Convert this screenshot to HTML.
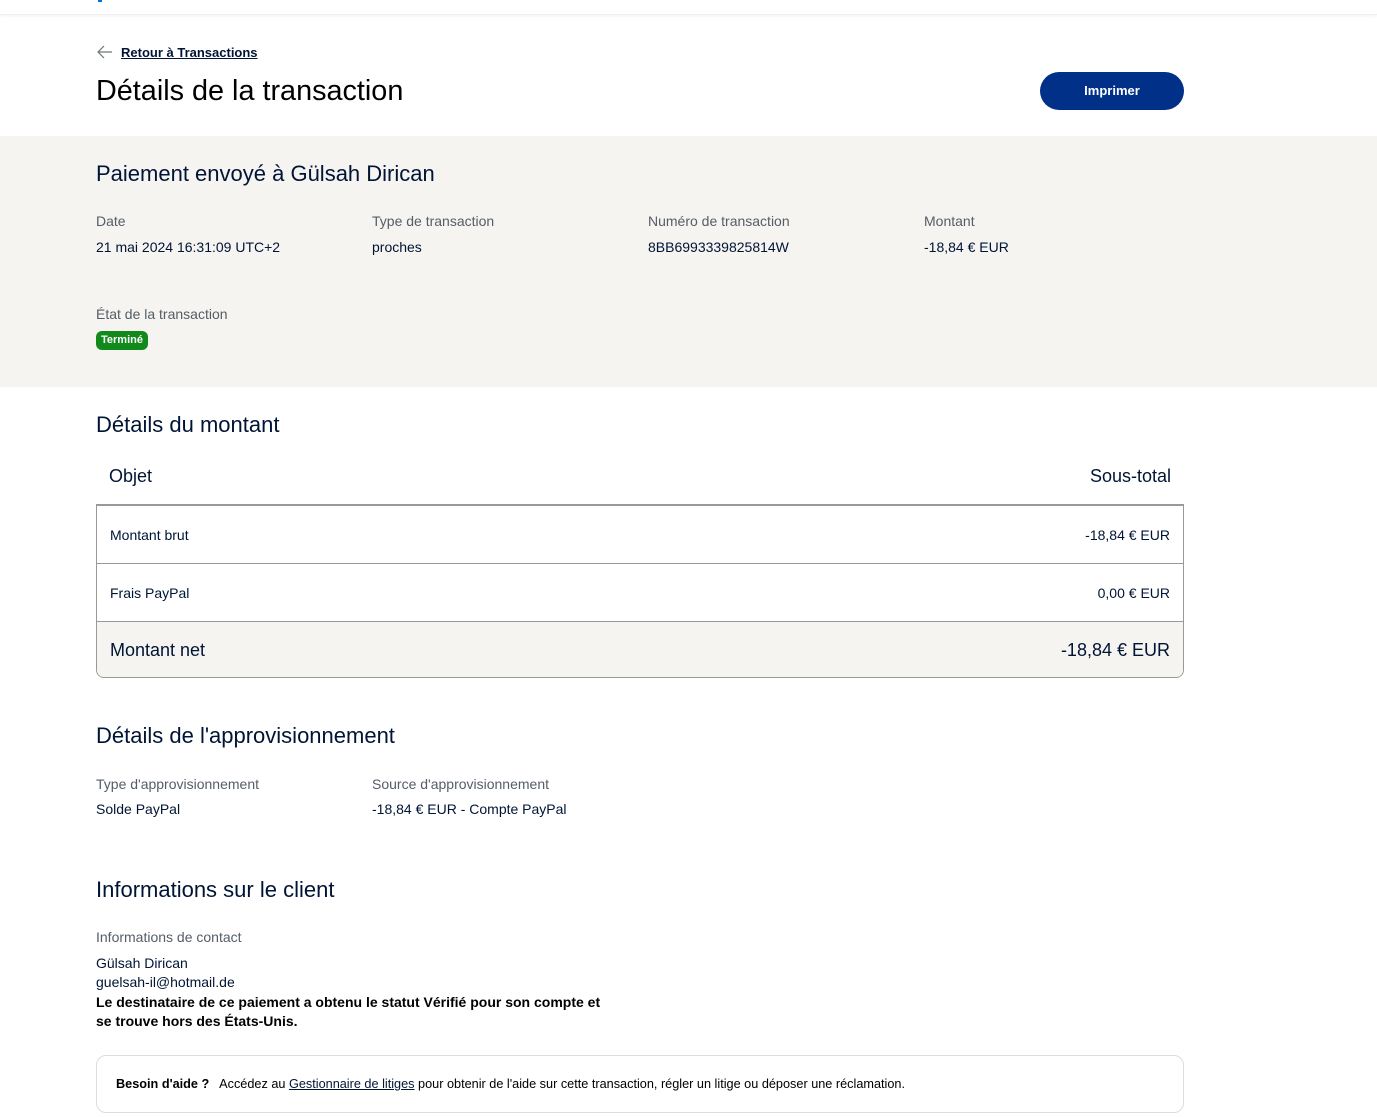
<!DOCTYPE html>
<html><head><meta charset="utf-8"><style>
*{box-sizing:border-box;margin:0;padding:0}
body{width:1377px;height:1117px;overflow:hidden;background:#fff;font-family:"Liberation Sans",Arial,sans-serif;color:#001435;position:relative}
.a{position:absolute;white-space:nowrap}
.lbl{font-size:14px;color:#545d68}
.val{font-size:14px;color:#001435}
h2{font-weight:400;font-size:22px;color:#001435}
</style></head><body>
<div class="a" style="left:0;top:0;width:1377px;height:15px;border-bottom:1px solid #eee;box-shadow:0 1px 3px rgba(0,0,0,.05)"></div>
<div class="a" style="left:98px;top:0;width:4px;height:2px;background:#0070e0"></div>
<svg class="a" style="left:97px;top:45px" width="16" height="14" viewBox="0 0 16 14"><path d="M15 7H2M7 1L1 7l6 6" fill="none" stroke="#6c7378" stroke-width="1.2"/></svg>
<div class="a" style="left:121px;top:45px;font-size:13px;font-weight:700;text-decoration:underline;color:#001435">Retour à Transactions</div>
<div class="a" style="left:96px;top:75px;font-size:28.8px;color:#000">Détails de la transaction</div>
<div class="a" style="left:1040px;top:72px;width:144px;height:38px;border-radius:19px;background:#003087;color:#fff;font-size:13px;font-weight:700;text-align:center;line-height:38px">Imprimer</div>
<div class="a" style="left:0;top:136px;width:1377px;height:251px;background:#f5f4f0"></div>
<h2 class="a" style="left:96px;top:161px">Paiement envoyé à Gülsah Dirican</h2>
<div class="a lbl" style="left:96px;top:213px">Date</div><div class="a val" style="left:96px;top:239px">21 mai 2024 16:31:09 UTC+2</div>
<div class="a lbl" style="left:372px;top:213px">Type de transaction</div><div class="a val" style="left:372px;top:239px">proches</div>
<div class="a lbl" style="left:648px;top:213px">Numéro de transaction</div><div class="a val" style="left:648px;top:239px">8BB6993339825814W</div>
<div class="a lbl" style="left:924px;top:213px">Montant</div><div class="a val" style="left:924px;top:239px">-18,84 € EUR</div>
<div class="a lbl" style="left:96px;top:306px">État de la transaction</div>
<div class="a" style="left:96px;top:331px;width:52px;height:19px;border-radius:6px;background:#128a1b;color:#fff;font-size:11px;font-weight:700;text-align:center;line-height:19px">Terminé</div>
<h2 class="a" style="left:96px;top:412px">Détails du montant</h2>
<div class="a" style="left:109px;top:466px;font-size:18px">Objet</div>
<div class="a" style="left:1000px;width:171px;text-align:right;top:466px;font-size:18px">Sous-total</div>
<div class="a" style="left:96px;top:504px;width:1088px;height:174px;border:1px solid #999;border-top:2px solid #999;border-radius:0 0 8px 8px;overflow:hidden">
 <div style="height:58px;border-bottom:1px solid #999;display:flex;justify-content:space-between;align-items:center;padding:0 13px;font-size:14px"><span>Montant brut</span><span>-18,84 € EUR</span></div>
 <div style="height:58px;border-bottom:1px solid #999;display:flex;justify-content:space-between;align-items:center;padding:0 13px;font-size:14px"><span>Frais PayPal</span><span>0,00 € EUR</span></div>
 <div style="height:56px;background:#f5f4f0;display:flex;justify-content:space-between;align-items:center;padding:0 13px;font-size:18px"><span>Montant net</span><span>-18,84 € EUR</span></div>
</div>
<h2 class="a" style="left:96px;top:723px">Détails de l'approvisionnement</h2>
<div class="a lbl" style="left:96px;top:776px">Type d'approvisionnement</div><div class="a val" style="left:96px;top:801px">Solde PayPal</div>
<div class="a lbl" style="left:372px;top:776px">Source d'approvisionnement</div><div class="a val" style="left:372px;top:801px">-18,84 € EUR - Compte PayPal</div>
<h2 class="a" style="left:96px;top:877px">Informations sur le client</h2>
<div class="a lbl" style="left:96px;top:929px">Informations de contact</div>
<div class="a val" style="left:96px;top:955px">Gülsah Dirican</div>
<div class="a val" style="left:96px;top:974px">guelsah-il@hotmail.de</div>
<div class="a" style="left:96px;top:993px;font-size:14px;font-weight:700;color:#000;line-height:19px;white-space:normal;width:515px">Le destinataire de ce paiement a obtenu le statut Vérifié pour son compte et se trouve hors des États-Unis.</div>
<div class="a" style="left:96px;top:1055px;width:1088px;height:58px;border:1px solid #ddd;border-radius:10px"></div>
<div class="a" style="left:116px;top:1077px;font-size:12.7px;color:#000"><b>Besoin d'aide ?</b>&nbsp;&nbsp; Accédez au <span style="text-decoration:underline;color:#001435">Gestionnaire de litiges</span> pour obtenir de l'aide sur cette transaction, régler un litige ou déposer une réclamation.</div>
</body></html>
